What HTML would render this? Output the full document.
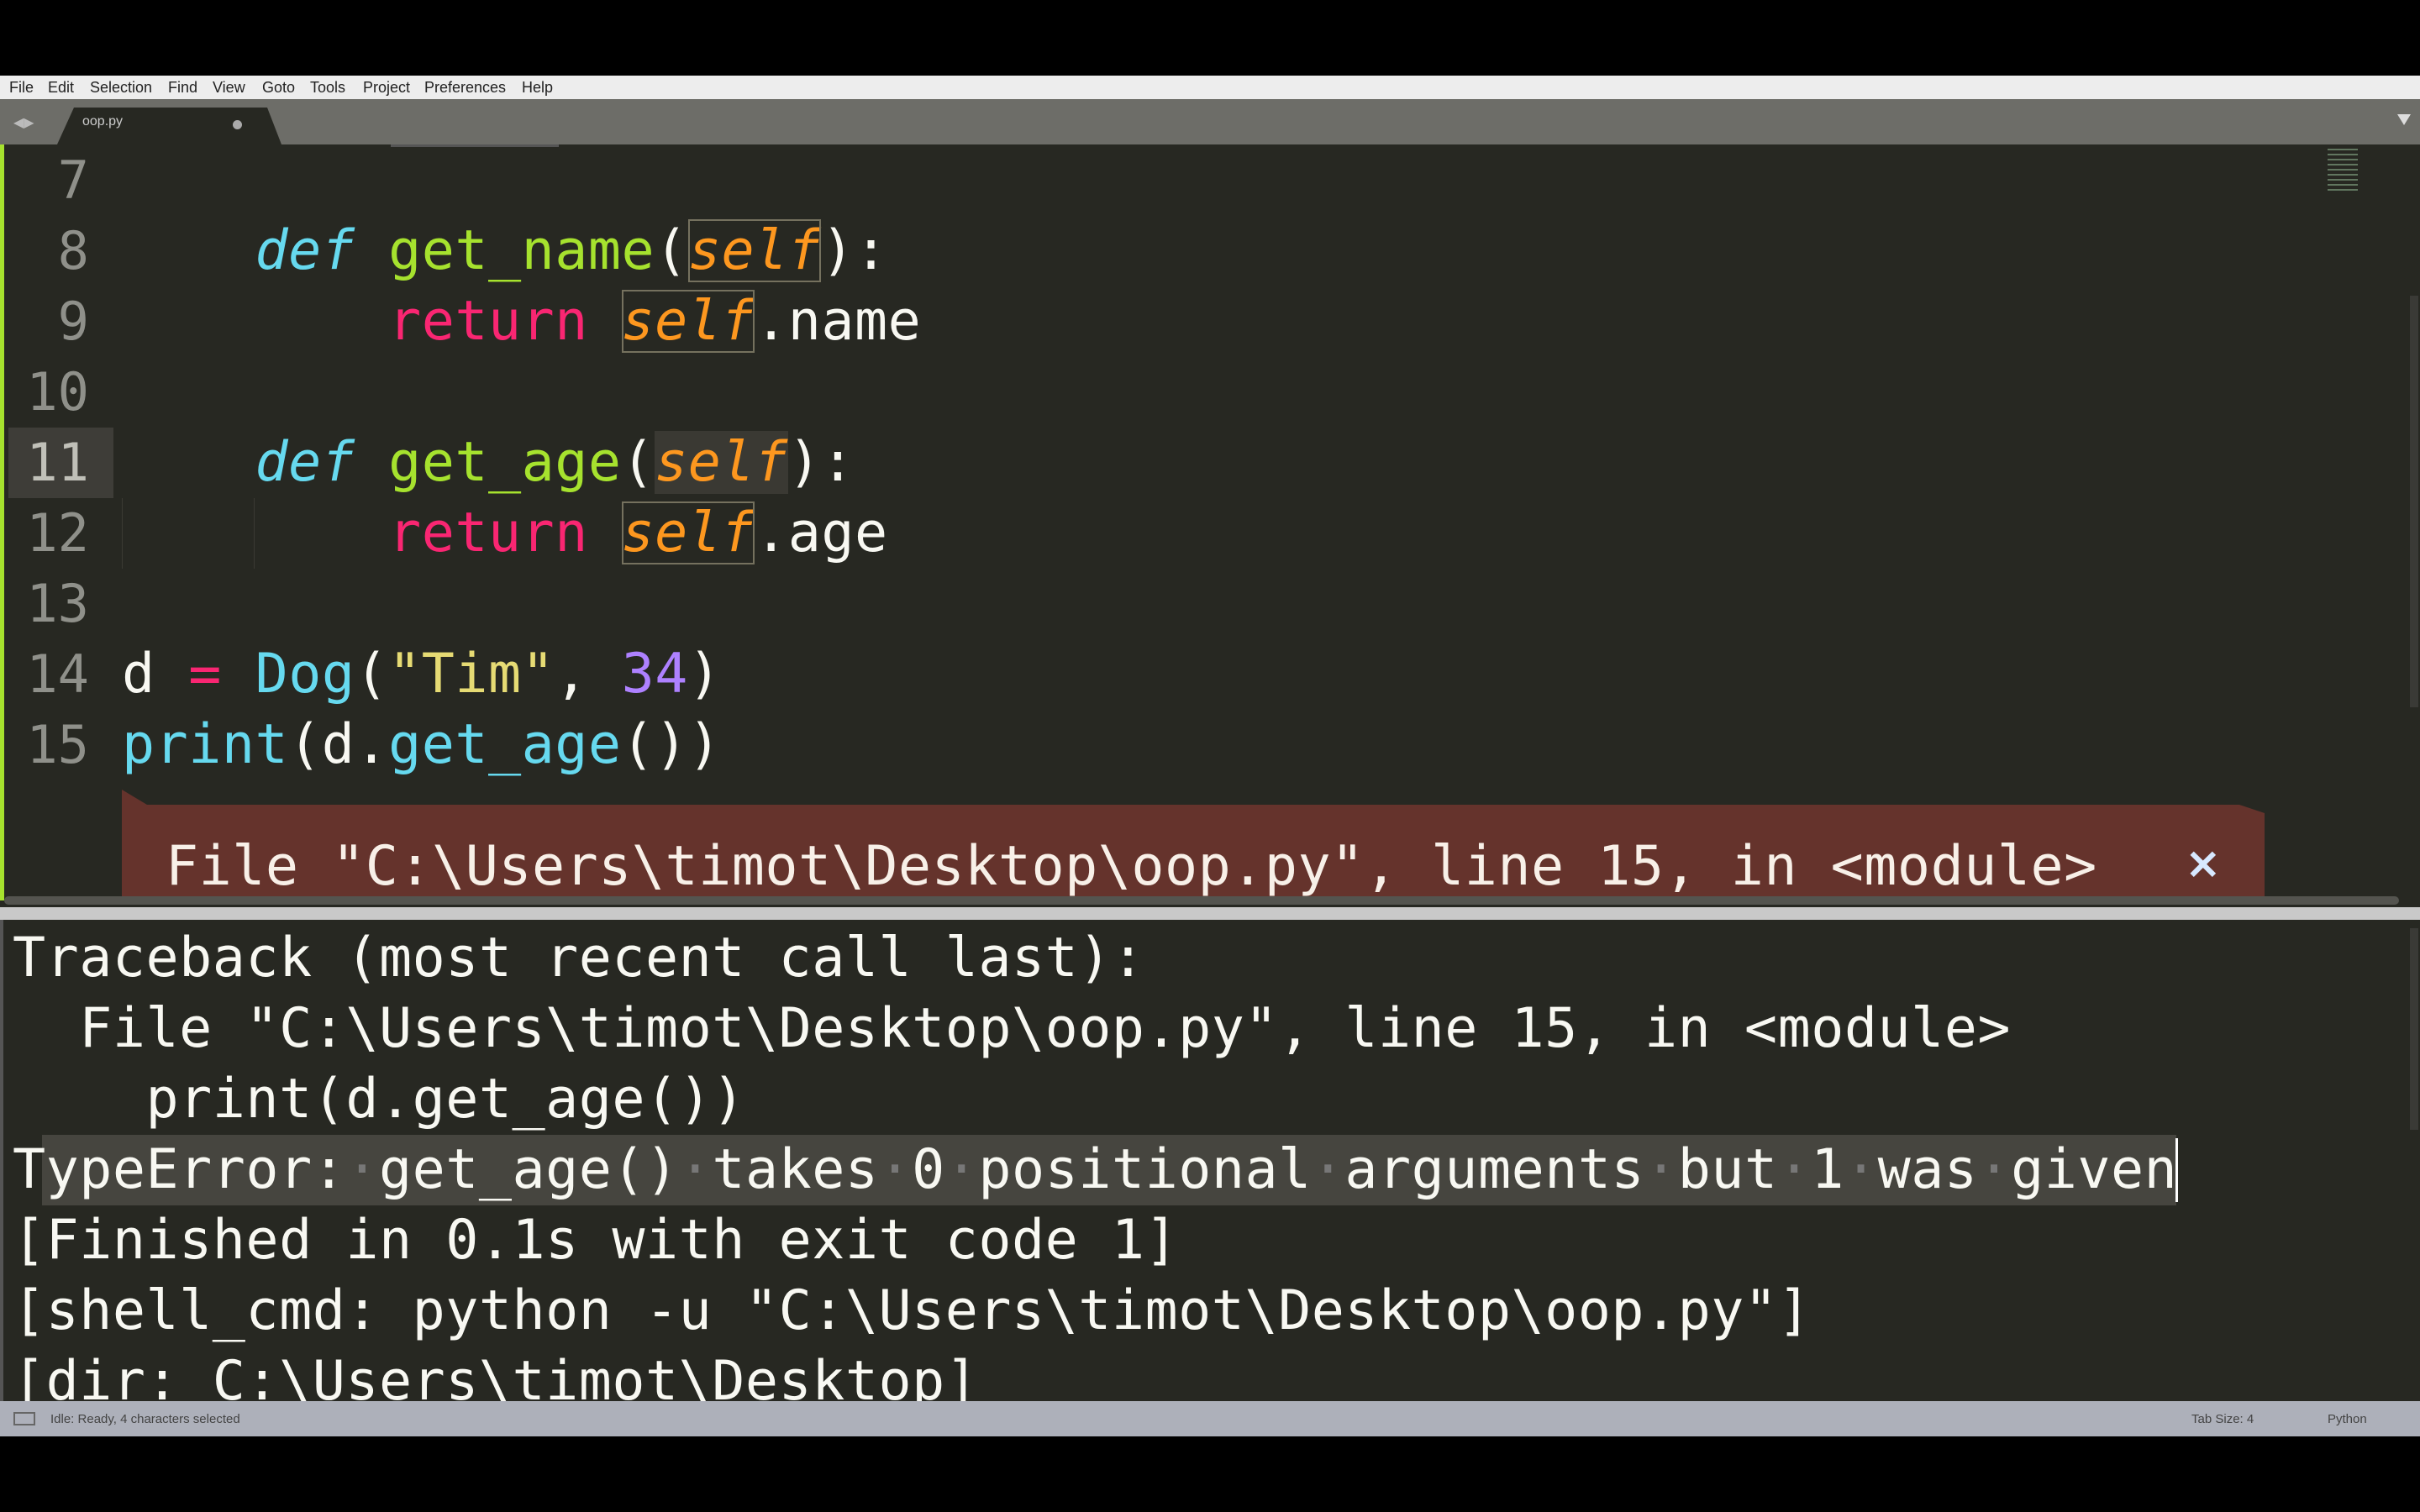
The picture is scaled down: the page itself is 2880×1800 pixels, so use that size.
<!DOCTYPE html>
<html><head><meta charset="utf-8"><style>
*{margin:0;padding:0;box-sizing:border-box}
body{width:2880px;height:1800px;background:#000;position:relative;overflow:hidden;font-family:"DejaVu Sans Mono","Liberation Mono",monospace}
.abs{position:absolute}
#menu{left:0;top:90px;width:2880px;height:28px;background:#ededed;font-family:"Liberation Sans",sans-serif;font-size:18px;color:#222}
#menu span{position:absolute;top:4px}
#tabs{left:0;top:118px;width:2880px;height:54px;background:#6d6d68}
#editor{left:0;top:172px;width:2880px;height:908px;background:#272822;overflow:hidden}
.ln{position:absolute;left:0;width:106px;text-align:right;font-size:62px;line-height:84px;color:#8f908a}
.cl{position:absolute;left:145px;font-size:65px;line-height:84px;color:#f8f8f2;white-space:pre;letter-spacing:0.5px}
.k{color:#66d9ef;font-style:italic}.f{color:#a6e22e}.s{color:#fd971f;font-style:italic}.r{color:#f92672}.y{color:#e6db74}.n{color:#ae81ff}.c{color:#66d9ef}
.bx{outline:2px solid #75715e;outline-offset:-2px}
#out{left:0;top:1095px;width:2880px;height:573px;background:#272822;overflow:hidden}
.ol{position:absolute;left:15px;font-size:65px;line-height:84px;color:#f8f8f2;white-space:pre;letter-spacing:0.5px}
#status{left:0;top:1668px;width:2880px;height:42px;background:#adb0ba;font-family:"Liberation Sans",sans-serif;font-size:15px;color:#444}
</style></head><body>
<div id="menu" class="abs">
<span style="left:11px">File</span><span style="left:57px">Edit</span><span style="left:107px">Selection</span><span style="left:200px">Find</span><span style="left:253px">View</span><span style="left:312px">Goto</span><span style="left:369px">Tools</span><span style="left:432px">Project</span><span style="left:505px">Preferences</span><span style="left:621px">Help</span>
</div>
<div id="tabs" class="abs">
<div class="abs" style="left:16px;top:18px;color:#bbb;font-size:16px;font-family:'DejaVu Sans',sans-serif">◀▶</div>
<svg class="abs" style="left:60px;top:10px" width="280" height="44"><polygon points="8,44 28,0 258,0 275,44" fill="#272822"/></svg>
<div class="abs" style="left:98px;top:18px;color:#ccc;font-size:16px;font-family:'Liberation Sans',sans-serif">oop.py</div>
<div class="abs" style="left:277px;top:25px;width:11px;height:11px;border-radius:50%;background:#aaa"></div>
<svg class="abs" style="left:2853px;top:18px" width="16" height="14"><polygon points="0,0 16,0 8,13" fill="#ddd"/></svg>
</div>
<div id="editor" class="abs">
<div class="abs" style="left:0;top:0;width:5px;height:900px;background:#a6e22e"></div>
<div class="abs" style="left:465px;top:0;width:200px;height:3px;background:#555"></div>
<div class="abs" style="left:10px;top:337px;width:125px;height:84px;background:#3e3d38"></div>
<div class="abs" style="left:302px;top:421px;width:1px;height:84px;background:#3b3a33"></div>
<div class="abs" style="left:145px;top:421px;width:1px;height:84px;background:#3b3a33"></div>
<div class="ln" style="top:1px">7</div>
<div class="ln" style="top:85px">8</div>
<div class="ln" style="top:169px">9</div>
<div class="ln" style="top:253px">10</div>
<div class="ln" style="top:337px;color:#c0c0b8">11</div>
<div class="ln" style="top:421px">12</div>
<div class="ln" style="top:505px">13</div>
<div class="ln" style="top:589px">14</div>
<div class="ln" style="top:673px">15</div>
<div class="cl" style="top:85px">    <span class="k">def</span> <span class="f">get_name</span>(<span class="s bx">self</span>):</div>
<div class="cl" style="top:169px">        <span class="r">return</span> <span class="s bx">self</span>.name</div>
<div class="cl" style="top:337px">    <span class="k">def</span> <span class="f">get_age</span>(<span class="s" style="background:#3a3933">self</span>):</div>
<div class="cl" style="top:421px">        <span class="r">return</span> <span class="s bx">self</span>.age</div>
<div class="cl" style="top:589px">d <span class="r">=</span> <span class="c">Dog</span>(<span class="y">"Tim"</span>, <span class="n">34</span>)</div>
<div class="cl" style="top:673px"><span class="c">print</span>(d.<span class="c">get_age</span>())</div>
<svg class="abs" style="left:145px;top:768px" width="2550" height="132"><polygon points="0,0 30,18 2520,18 2550,28 2550,132 0,132" fill="#65332c"/></svg>
<div class="cl" style="left:197px;top:818px;color:#f8f0e8">File "C:\Users\timot\Desktop\oop.py", line 15, in &lt;module&gt;</div>
<div class="abs" style="left:2600px;top:826px;color:#d7e8ff;font-size:52px;font-family:'DejaVu Sans',sans-serif;font-weight:bold">×</div>
<div class="abs" style="left:2770px;top:5px;width:36px;height:50px;opacity:.6;background:repeating-linear-gradient(#8a8 0 2px,transparent 2px 6px)"></div>
<div class="abs" style="left:2868px;top:180px;width:10px;height:490px;background:#3a3a36"></div>
<div class="abs" style="left:5px;top:895px;width:2850px;height:10px;background:#54544f;border-radius:5px"></div>
</div>
<div class="abs" style="left:0;top:1080px;width:2880px;height:15px;background:#c9c9c9"></div>
<div id="out" class="abs">
<div class="abs" style="left:0;top:0;width:4px;height:573px;background:#555"></div>
<div class="abs" style="left:50px;top:256px;width:2540px;height:84px;background:#46453f"></div>
<div class="ol" style="top:4px">Traceback (most recent call last):</div>
<div class="ol" style="top:88px">  File "C:\Users\timot\Desktop\oop.py", line 15, in &lt;module&gt;</div>
<div class="ol" style="top:172px">    print(d.get_age())</div>
<div class="ol" style="top:256px">TypeError:<span style="color:#777">·</span>get_age()<span style="color:#777">·</span>takes<span style="color:#777">·</span>0<span style="color:#777">·</span>positional<span style="color:#777">·</span>arguments<span style="color:#777">·</span>but<span style="color:#777">·</span>1<span style="color:#777">·</span>was<span style="color:#777">·</span>given</div>
<div class="abs" style="left:2589px;top:1360px;width:3px;height:72px;background:#fff;display:none"></div>
<div class="ol" style="top:340px">[Finished in 0.1s with exit code 1]</div>
<div class="ol" style="top:424px">[shell_cmd: python -u "C:\Users\timot\Desktop\oop.py"]</div>
<div class="ol" style="top:508px">[dir: C:\Users\timot\Desktop]</div>
<div class="abs" style="left:2868px;top:10px;width:10px;height:240px;background:#3a3a36"></div>
</div>
<div class="abs" style="left:2589px;top:1355px;width:3px;height:76px;background:#fff"></div>
<div id="status" class="abs">
<div class="abs" style="left:16px;top:13px;width:26px;height:16px;border:2px solid #666"></div>
<div class="abs" style="left:60px;top:13px">Idle: Ready, 4 characters selected</div>
<div class="abs" style="left:2608px;top:13px">Tab Size: 4</div>
<div class="abs" style="left:2770px;top:13px">Python</div>
</div>
</body></html>
